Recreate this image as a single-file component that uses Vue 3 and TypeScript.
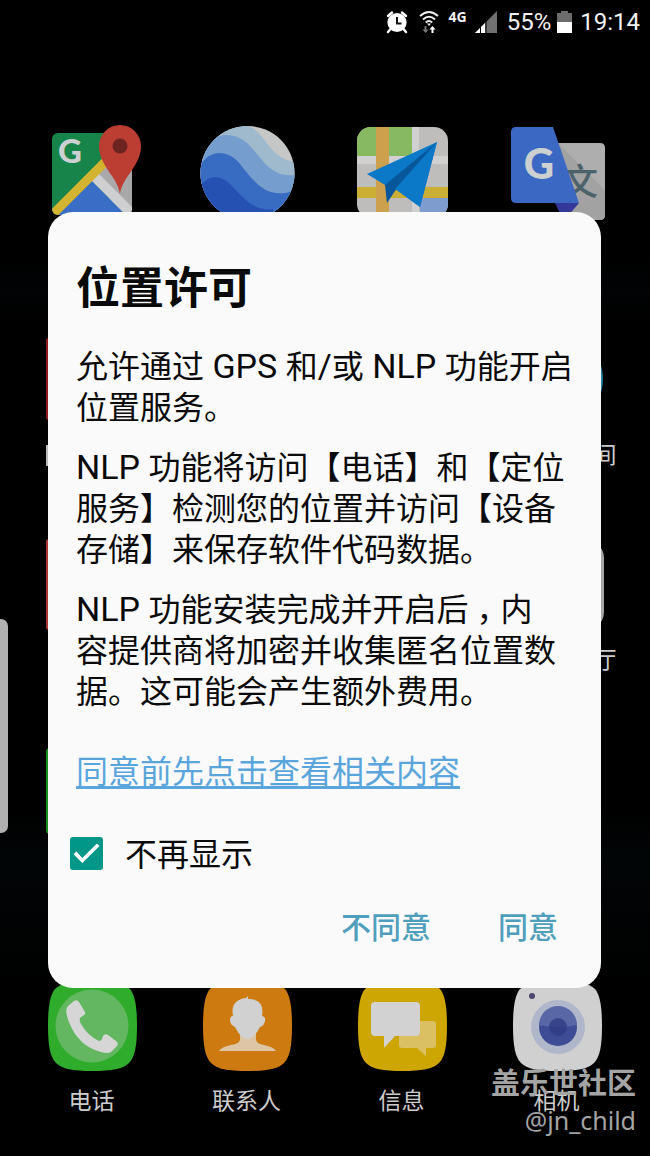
<script setup lang="ts">
import { ref } from 'vue'

const dontShowAgain = ref<boolean>(true)
const squircle =
  'M60 2C80 2 92 4 98 10C103 16 105 28 105 47C105 66 103 78 97 84C91 90 80 92 60 92C41 92 30 90 24 84C18 78 16 66 16 47C16 28 18 16 23 10C29 4 41 2 60 2Z'
</script>

<template>
  <div class="phone">
    <header class="status">
      <svg class="alarm" viewBox="0 0 24 24" width="24" height="24">
        <path d="M3 6L7 2.500M21 6L17 2.500M5.500 19L3 22M18.500 19L21 22" stroke="#fff" stroke-width="2.400" stroke-linecap="round" />
        <circle cx="12" cy="12.500" r="9.600" fill="#fff" />
        <path d="M12 7V13.500H16.500" fill="none" stroke="#111" stroke-width="2" />
      </svg>
      <svg class="wifi" viewBox="0 0 20 24" width="20" height="24">
        <g fill="none" stroke="#eee" stroke-width="2">
          <path d="M1 6Q10 -2 19 6" /><path d="M4 9.500Q10 4 16 9.500" /><path d="M6.800 12.500Q10 9.500 13.200 12.500" />
        </g>
        <path d="M8 13.500H12L10 16Z" fill="#eee" />
        <path d="M5.500 16H7.500V19.500H9.500L6.500 23L3.500 19.500H5.500Z" fill="#777" />
        <path d="M12.500 23H14.500V19.500H16.500L13.500 16L10.500 19.500H12.500Z" fill="#fff" />
      </svg>
      <span class="net">4G</span>
      <svg class="signal" viewBox="0 0 22 22" width="22" height="22">
        <path d="M0 22L22 0V22Z" fill="#707070" />
        <path d="M0 22L10 12V22Z" fill="#fff" />
        <path d="M5.500 15V22M11 10V22" stroke="#000" />
      </svg>
      <span class="num">55%</span>
      <svg class="battery" viewBox="0 0 15 22" width="15" height="22">
        <path d="M4 0H11V2H15V22H0V2H4Z" fill="#6c6c6c" /><path d="M0 11H15V22H0Z" fill="#fff" />
      </svg>
      <time class="num">19:14</time>
    </header>

    <main class="apps">
      <svg class="icon" viewBox="0 0 120 96">
        <clipPath id="mapClip"><rect x="20" y="9" width="80" height="82" rx="6" /></clipPath>
        <g clip-path="url(#mapClip)">
          <rect x="20" y="9" width="80" height="82" fill="#17844a" />
          <path d="M62 54L84 32H100V91H90Z" fill="#aaa9aa" />
          <path d="M60 57L26 91H94Z" fill="#396dc6" />
          <path d="M63 53L101 91" stroke="#cfcfd1" stroke-width="10" />
          <path d="M78 33L18 93" stroke="#d3b431" stroke-width="9" />
        </g>
        <text x="38" y="39" class="mark" font-size="33">G</text>
        <path d="M88 70C86 53 67 42 67 22A21 21 0 0 1 109 22C109 42 90 53 88 70Z" fill="#bc3d32" />
        <circle cx="88" cy="22" r="7.500" fill="#6d2320" />
      </svg>
      <svg class="icon" viewBox="0 0 120 96">
        <clipPath id="earthClip"><circle cx="60.500" cy="49" r="47" /></clipPath>
        <g clip-path="url(#earthClip)">
          <rect width="120" height="96" fill="#c5c7c7" />
          <path d="M10 0H52C82 3 77 35 110 38V96H10Z" fill="#9fb9cd" />
          <path d="M10 30C24 8 45 6 60 19C76 34 82 54 110 51V96H10Z" fill="#759dcd" />
          <path d="M10 50C16 27 38 22 53 40C66 56 80 79 110 65V96H10Z" fill="#386bc2" />
          <path d="M10 68C18 52 31 48 43 60C58 75 66 87 86 85V96H10Z" fill="#2552b2" />
        </g>
      </svg>
      <svg class="icon" viewBox="0 0 120 96">
        <clipPath id="naviClip"><rect x="15" y="3" width="91" height="91" rx="14" /></clipPath>
        <g clip-path="url(#naviClip)">
          <rect x="15" y="3" width="91" height="91" fill="#bfbdbb" />
          <path d="M15 3H70V32H15Z" fill="#87b963" />
          <path d="M70 3H77V32H106V40H15V32H70Z" fill="#d0d0d0" />
          <path d="M15 63H106V74H15Z" fill="#cbaf35" />
          <path d="M34 3H47V94H34Z" fill="#cda04d" />
          <path d="M78 74H106V94H78Z" fill="#7e9dce" />
          <path d="M70 74H77V94H70Z" fill="#d0d0d0" />
        </g>
        <path d="M95 18L25 50L43 61L53 64L78 83Z" fill="#0b78c8" />
        <path d="M95 18L43 61L45 79L53 67Z" fill="#07579a" />
        <path d="M95 18L53 65L78 83Z" fill="#0b78c8" />
      </svg>
      <svg class="icon" viewBox="0 0 120 96">
        <path d="M57 19H103Q108 19 108 24V91Q108 96 103 96H75L60 60Z" fill="#aeaeae" />
        <path d="M61 19L108 66V91Q108 96 103 96H78L71 90Z" fill="#a2a2a2" />
        <text x="83" y="71" class="hanzi">文</text>
        <path d="M58 79H82L71 92L66 96Z" fill="#34389b" />
        <path d="M19 3H56L82 79H19Q14 79 14 74V8Q14 3 19 3Z" fill="#3b68c3" />
        <text x="42" y="55" class="mark" font-size="42">G</text>
      </svg>

      <div class="app">
        <svg class="icon" viewBox="0 0 120 96"><rect x="14" y="9" width="92" height="82" rx="3" fill="#92191d" /></svg>
        <i class="stem"></i>
      </div>
      <div class="app last">
        <svg class="icon" viewBox="0 0 120 96"><circle cx="60" cy="50" r="46" fill="#237f9d" /></svg>
        <span>间</span>
      </div>
      <div class="app">
        <svg class="icon" viewBox="0 0 120 96"><rect x="14" y="5" width="92" height="91" rx="3" fill="#ac3435" /></svg>
      </div>
      <div class="app last">
        <svg class="icon" viewBox="0 0 120 96"><rect x="14" y="6" width="93" height="90" rx="18" fill="#a6a6a6" /></svg>
        <span>厅</span>
      </div>
      <div class="app">
        <svg class="icon" viewBox="0 0 120 96"><rect x="14" y="9" width="92" height="86" rx="4" fill="#188b1e" /></svg>
      </div>
    </main>

    <nav class="dock">
      <a href="#phone">
        <svg class="icon" viewBox="0 0 120 96">
          <path :d="squircle" fill="#30ac2c" />
          <circle cx="60" cy="47" r="36.500" fill="#62b760" />
          <path d="M36 27L42 22Q45 20 47 23L53 33Q54 35 52 36L48 39Q47 41 49 45Q56 57 67 62Q69 62 70 60L71 57Q73 54 76 56L84 62Q87 64 85 67L79 73Q76 75 69 73Q46 67 37 43Q32 31 36 27Z" fill="#d5d6d5" />
        </svg>
        <span>电话</span>
      </a>
      <a href="#contacts">
        <svg class="icon" viewBox="0 0 120 96">
          <path :d="squircle" fill="#cd7b10" />
          <path d="M53 54H69V61Q70 65 77 66Q87 68 89 72H32Q34 68 44 66Q52 65 53 61Z" fill="#ddc5a5" />
          <path d="M60 60Q54 60 48 48Q43 46 43 41Q43 37 46 37Q43 21 59 19L61 17L61 20Q78 20 75 37Q79 38 78 42Q77 47 73 48Q67 60 60 60Z" fill="#d1d1d1" />
        </svg>
        <span>联系人</span>
      </a>
      <a href="#messages">
        <svg class="icon" viewBox="0 0 120 96">
          <path :d="squircle" fill="#cda604" />
          <path d="M60 42H91Q94 42 94 45V66Q94 69 91 69H84V77L75 69H60Q57 69 57 66V45Q57 42 60 42Z" fill="#dbbf63" />
          <path d="M33 23H74Q78 23 78 27V53Q78 57 74 57H53L42 69V57H33Q29 57 29 53V27Q29 23 33 23Z" fill="#d2d2d2" />
        </svg>
        <span>信息</span>
      </a>
      <a href="#camera">
        <svg class="icon" viewBox="0 0 120 96">
          <path :d="squircle" fill="#d0d0d1" />
          <circle cx="35" cy="17" r="3" fill="#4b466d" />
          <circle cx="61" cy="48" r="27" fill="#b0b7ca" />
          <circle cx="61" cy="48" r="19" fill="#3d4c94" />
          <path d="M42 46A19 19 0 0 1 80 46Q61 50 42 46Z" fill="#5967a7" />
          <circle cx="61" cy="48" r="9" fill="#303c83" opacity=".8" />
        </svg>
        <span>相机</span>
      </a>
    </nav>

    <div class="edge"></div>
    <div class="watermark"><b>盖乐世社区</b><span>@jn_child</span></div>

    <div class="overlay">
      <section class="dialog" role="dialog" aria-labelledby="title">
        <h1 id="title">位置许可</h1>
        <p>允许通过<span class="latin"> GPS </span>和<span class="latin">/</span>或<span class="latin"> NLP </span>功能开启<br />位置服务。</p>
        <p><span class="latin">NLP </span>功能将访问【电话】<span class="latin"></span>和【定位<br />服务】检测您的位置并访问【设备<br />存储】来保存软件代码数据。</p>
        <p><span class="latin">NLP </span>功能安装完成并开启后<span class="comma">，</span>内<br />容提供商将加密并收集匿名位置数<br />据。这可能会产生额外费用。</p>
        <a class="more" href="#details">同意前先点击查看相关内容</a>
        <label class="check"><input v-model="dontShowAgain" type="checkbox" />不再显示</label>
        <div class="actions">
          <button type="button">不同意</button>
          <button type="button">同意</button>
        </div>
      </section>
    </div>
  </div>
</template>

<style>
body { margin: 0; background: #000; }
</style>

<style scoped>
.phone {
  position: relative;
  display: flex;
  flex-direction: column;
  box-sizing: border-box;
  min-height: 100vh;
  padding-bottom: 39px;
  overflow: hidden;
  background: linear-gradient(#000 0 22%, #010304 25%, #000 28% 70%, #020506 74%, #000 86%);
  color: #ccc;
  font-family: Roboto, "Noto Sans CJK SC", sans-serif;
}
.status {
  display: flex;
  align-items: center;
  justify-content: flex-end;
  height: 44px;
  padding-right: 10px;
  color: #f2f2f2;
}
.wifi { margin: 0 10px; }
.net { align-self: flex-start; margin-top: 9px; font: bold 14px/16px "Noto Sans", sans-serif; }
.signal { margin: 0 10px 0 8px; }
.num { font-size: 24px; line-height: 32px; }
.battery { margin: 0 8px 0 6px; }

.apps, .dock {
  display: grid;
  grid-template-columns: repeat(4, 1fr);
  justify-items: center;
  padding: 0 16px 0 14px;
}
.apps { grid-auto-rows: 142px; row-gap: 63px; padding-top: 80px; }
.icon { display: block; width: 120px; height: 96px; }
.mark { fill: #ccd0d0; font-family: Lato, sans-serif; font-weight: 900; text-anchor: middle; }
.hanzi { fill: #4c626b; font: 500 36px "Noto Sans CJK SC", sans-serif; text-anchor: middle; }
.app { display: flex; flex-direction: column; gap: 16px; grid-column: 1; font-size: 23px; line-height: 30px; }
.last { grid-column: 4; text-align: right; }
.stem { width: 4px; height: 21px; margin: 4px 0 0 14px; background: #bbb; }
.dock { margin-top: auto; }
.dock a {
  display: flex;
  flex-direction: column;
  align-items: center;
  gap: 12px;
  color: #ccc;
  font-size: 23px;
  line-height: 30px;
  text-decoration: none;
}

.edge {
  position: absolute;
  left: 0;
  top: 619px;
  width: 8px;
  height: 214px;
  border-radius: 0 7px 7px 0;
  background: #b0b0b0;
}
.watermark {
  position: absolute;
  right: 14px;
  bottom: 18px;
  display: flex;
  flex-direction: column;
  align-items: flex-end;
  color: #a4a4a4;
  font: 25px/36px "Noto Sans", "Noto Sans CJK SC", sans-serif;
}
.watermark b { font-size: 29px; line-height: 38px; }

.overlay {
  position: absolute;
  inset: 44px 0 0;
  display: flex;
  align-items: center;
  padding: 0 49px 0 48px;
}
.dialog {
  flex: 1;
  display: flex;
  flex-direction: column;
  align-items: flex-start;
  box-sizing: border-box;
  padding: 49px 20px 40px 28px;
  border-radius: 25px;
  background: #fafafa;
  color: #0a0a0a;
  font-size: 32px;
  line-height: 41px;
  text-spacing-trim: space-all;
}
h1 { margin: 0 0 11px; font-size: 44px; line-height: 56px; font-weight: 700; }
p { margin: 19px 0 0; }
.latin { font-size: 34px; line-height: 32px; }
.comma { display: inline-block; width: 32px; text-indent: 8px; }
.more {
  margin-top: 39px;
  color: #5aa6dc;
  text-decoration-thickness: 3px;
  text-underline-offset: 3px;
}
.check { display: flex; align-items: center; gap: 22px; margin: 42px 0 0 -6px; }
.check input {
  appearance: none;
  display: grid;
  place-items: center;
  width: 33px;
  height: 33px;
  margin: 0 0 4px;
  border-radius: 3px;
  background: #009688;
}
.check input:not(:checked) { background: #fafafa; border: 3px solid #777; }
.check input:checked::after {
  content: "";
  box-sizing: border-box;
  width: 26px;
  height: 20px;
  background: #fff;
  clip-path: polygon(0 54%, 11% 40%, 34% 72%, 90% 0, 100% 12%, 34% 98%);
}
.actions { display: flex; align-self: flex-end; gap: 67px; margin: 32px 23px 0 0; }
button {
  padding: 0;
  border: 0;
  background: none;
  color: #4f9fbc;
  font: 500 30px/40px Roboto, "Noto Sans CJK SC", sans-serif;
}
</style>
